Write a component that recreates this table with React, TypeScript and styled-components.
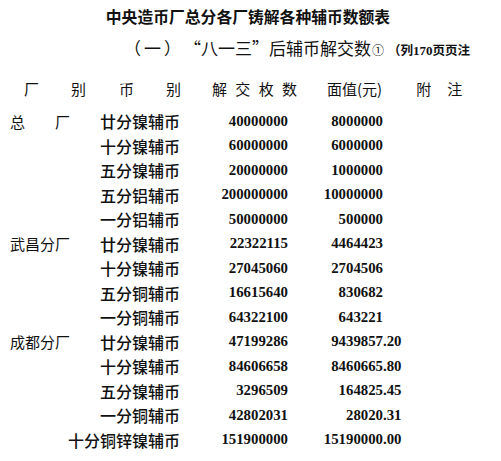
import styled, { createGlobalStyle } from "styled-components";

const GlobalStyle = createGlobalStyle`
  html, body {
    margin: 0;
    padding: 0;
    background: #ffffff;
  }
  body {
    font-family: "Noto Sans CJK SC", sans-serif;
    color: #111111;
  }
`;

const Page = styled.div`
  width: 501px;
  height: 461px;
  box-sizing: border-box;
  padding-top: 7px;
  overflow: hidden;
  background: #ffffff;
`;

const Title = styled.h1`
  margin: 0;
  padding-right: 5px;
  text-align: center;
  font-size: 15.8px;
  line-height: 20px;
  font-weight: 700;
`;

const Subtitle = styled.h2`
  margin: 9px 0 0;
  padding-left: 124px;
  display: flex;
  align-items: baseline;
  font-size: 17px;
  line-height: 24px;
  font-weight: 400;
  white-space: nowrap;
`;

const Spaced = styled.span`
  letter-spacing: 3px;
`;

const Marker = styled.span`
  font-size: 12px;
  margin: 0 4px 0 1px;
`;

const SourceNote = styled.span`
  font-size: 12.5px;
  font-weight: 700;
`;

const Digits = styled.span`
  font-family: "Liberation Serif", serif;
  font-weight: 700;
  font-size: 13px;
`;

const HeadRow = styled.div`
  margin-top: 13px;
  display: flex;
  height: 24px;
  align-items: center;
  font-size: 15px;
`;

const HeadCell = styled.div<{ $left: number; $width?: number }>`
  margin-left: ${(p) => p.$left}px;
  width: ${(p) => (p.$width ? `${p.$width}px` : "auto")};
  display: flex;
  justify-content: space-between;
  white-space: nowrap;
`;

const Body = styled.div`
  margin-top: 9px;
  display: flex;
  flex-direction: column;
`;

const Row = styled.div`
  display: flex;
  height: 24.5px;
  align-items: center;
  padding-left: 10px;
  white-space: nowrap;
`;

const Factory = styled.div`
  width: 90px;
  font-size: 15px;
  white-space: pre;
`;

const Coin = styled.div`
  width: 80px;
  display: flex;
  justify-content: flex-end;
  font-size: 16px;
  font-weight: 500;
`;

const Number = styled.div<{ $width: number; $align?: "left" | "right" }>`
  width: ${(p) => p.$width}px;
  text-align: ${(p) => p.$align ?? "right"};
  font-family: "Liberation Serif", serif;
  font-weight: 700;
  font-size: 14.8px;
`;

type Item = {
  factory?: string;
  coin: string;
  count: string;
  value: string;
};

const rows: Item[] = [
  { factory: "总　　厂", coin: "廿分镍辅币", count: "40000000", value: "8000000" },
  { coin: "十分镍辅币", count: "60000000", value: "6000000" },
  { coin: "五分镍辅币", count: "20000000", value: "1000000" },
  { coin: "五分铝辅币", count: "200000000", value: "10000000" },
  { coin: "一分铝辅币", count: "50000000", value: "500000" },
  { factory: "武昌分厂", coin: "廿分镍辅币", count: "22322115", value: "4464423" },
  { coin: "十分镍辅币", count: "27045060", value: "2704506" },
  { coin: "五分铜辅币", count: "16615640", value: "830682" },
  { coin: "一分铜辅币", count: "64322100", value: "643221" },
  { factory: "成都分厂", coin: "廿分镍辅币", count: "47199286", value: "9439857.20" },
  { coin: "十分镍辅币", count: "84606658", value: "8460665.80" },
  { coin: "五分镍辅币", count: "3296509", value: "164825.45" },
  { coin: "一分铜辅币", count: "42802031", value: "28020.31" },
  { coin: "十分铜锌镍辅币", count: "151900000", value: "15190000.00" },
];

const App = () => {
  return (
    <>
      <GlobalStyle />
      <Page>
        <Title>中央造币厂总分各厂铸解各种辅币数额表</Title>
        <Subtitle>
          <Spaced>（一）</Spaced>
          <span>“八一三”后辅币解交数</span>
          <Marker>①</Marker>
          <SourceNote>
            （列<Digits>170</Digits>页页注
          </SourceNote>
        </Subtitle>
        <HeadRow>
          <HeadCell $left={24} $width={62}>
            <span>厂</span>
            <span>别</span>
          </HeadCell>
          <HeadCell $left={33} $width={62}>
            <span>币</span>
            <span>别</span>
          </HeadCell>
          <HeadCell $left={31} $width={85}>
            <span>解</span>
            <span>交</span>
            <span>枚</span>
            <span>数</span>
          </HeadCell>
          <HeadCell $left={30}>
            <span>面值(元)</span>
          </HeadCell>
          <HeadCell $left={34} $width={46}>
            <span>附</span>
            <span>注</span>
          </HeadCell>
        </HeadRow>
        <Body>
          {rows.map((r, i) => {
            const [whole, frac] = r.value.split(".");
            return (
              <Row key={i}>
                <Factory>{r.factory ?? ""}</Factory>
                <Coin>{r.coin}</Coin>
                <Number $width={108}>{r.count}</Number>
                <Number $width={95}>{whole}</Number>
                <Number $width={30} $align="left">
                  {frac ? `.${frac}` : ""}
                </Number>
              </Row>
            );
          })}
        </Body>
      </Page>
    </>
  );
};

export default App;
